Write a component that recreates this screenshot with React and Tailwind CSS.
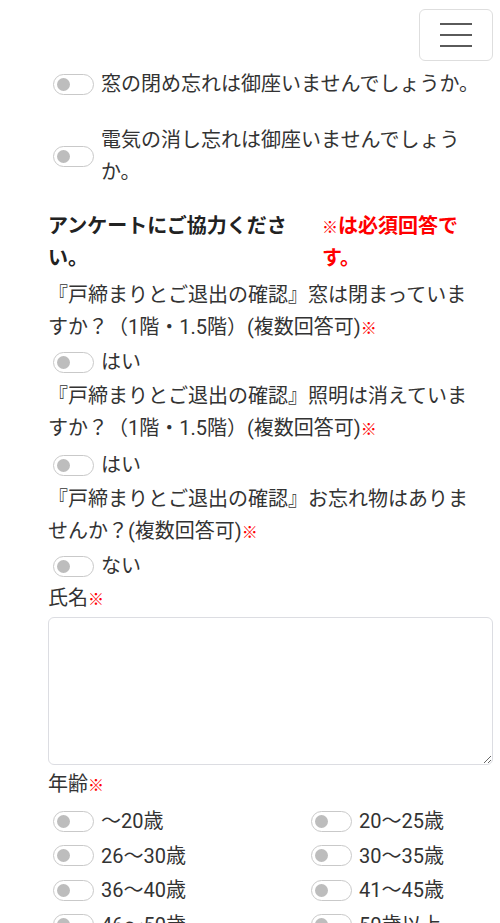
const font = { fontFamily: 'Roboto, "Noto Sans CJK JP", sans-serif' }

function Toggle() {
  return (
    <span className="flex h-[21px] w-[41px] shrink-0 items-center rounded-full border border-[#c9c9c9] bg-white pl-[3px]">
      <span className="h-[13px] w-[13px] rounded-full bg-[#bdbdbd]" />
    </span>
  )
}

function Req() {
  return <span className="text-[16px] font-bold leading-none text-[#ff0000]">※</span>
}

function Check({ label, className = '' }) {
  return (
    <label className={`flex items-center gap-[7px] pl-[5px] ${className}`}>
      <Toggle />
      <span className="w-[392px]">{label}</span>
    </label>
  )
}

function AgeCheck({ label }) {
  return (
    <label className="flex h-[32px] items-center gap-[7px] pl-[5px]">
      <Toggle />
      <span>{label}</span>
    </label>
  )
}

const ages = [
  '～20歳',
  '20～25歳',
  '26～30歳',
  '30～35歳',
  '36～40歳',
  '41～45歳',
  '46～50歳',
  '50歳以上',
]

export default function App() {
  return (
    <div
      className="h-[923px] overflow-hidden bg-white text-[20px] leading-[32px] text-[#333]"
      style={font}
    >
      <div className="flex justify-end pr-[7px] pt-[9px]">
        <button
          type="button"
          className="flex h-[52px] w-[74px] flex-col items-center justify-center gap-[8.5px] rounded-[6px] border border-[#dedede] bg-white"
        >
          <span className="h-[2.5px] w-[32px] bg-[#5a5a5a]" />
          <span className="h-[2.5px] w-[32px] bg-[#5a5a5a]" />
          <span className="h-[2.5px] w-[32px] bg-[#5a5a5a]" />
        </button>
      </div>

      <div className="pl-[48px] pr-[7px]">
        <Check className="mt-[7px]" label="窓の閉め忘れは御座いませんでしょうか。" />
        <Check className="mt-[24px]" label="電気の消し忘れは御座いませんでしょうか。" />

        <div className="mt-[22px] flex gap-[24px] font-bold">
          <div className="w-[250px] text-[#222]">アンケートにご協力ください。</div>
          <div className="w-[160px] text-[#ff0000]">
            <span className="text-[16px] leading-none">※</span>は必須回答です。
          </div>
        </div>

        <p className="mt-[5px] pr-[12px]">
          『戸締まりとご退出の確認』窓は閉まっていますか？（1階・1.5階）(複数回答可)<Req />
        </p>
        <Check className="mt-[3px]" label="はい" />

        <p className="mt-[2px] pr-[12px]">
          『戸締まりとご退出の確認』照明は消えていますか？（1階・1.5階）(複数回答可)<Req />
        </p>
        <Check className="mt-[5px]" label="はい" />

        <p className="mt-[2px] pr-[12px]">
          『戸締まりとご退出の確認』お忘れ物はありませんか？(複数回答可)<Req />
        </p>
        <Check className="mt-[3px]" label="ない" />

        <p>
          氏名<Req />
        </p>
        <textarea className="mt-[3px] block h-[148px] w-[445px] rounded-[6px] border border-[#dcdde2] bg-white" />

        <p className="mt-[3px]">
          年齢<Req />
        </p>
        <div className="mt-[5px] grid grid-cols-[258px_1fr] gap-y-[2.5px]">
          {ages.map((a) => (
            <AgeCheck key={a} label={a} />
          ))}
        </div>
      </div>
    </div>
  )
}
